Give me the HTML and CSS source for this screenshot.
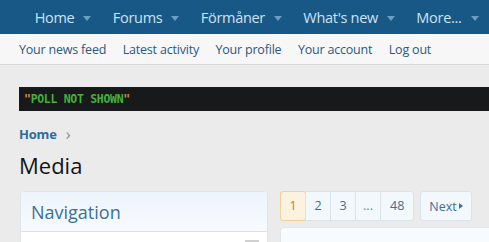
FILE: index.html
```html
<!DOCTYPE html>
<html lang="en">
<head>
    <meta charset="UTF-8">
    <meta name="viewport" content="width=device-width, initial-scale=1.0">
    <title>Media</title>
    <link rel="stylesheet" href="styles.css">
</head>
<body>

    <nav class="top-nav">
        <a href="#" class="top-link">Home <span class="caret"></span></a>
        <a href="#" class="top-link">Forums <span class="caret"></span></a>
        <a href="#" class="top-link">Förmåner <span class="caret"></span></a>
        <a href="#" class="top-link">What's new <span class="caret"></span></a>
        <a href="#" class="top-link">More... <span class="caret"></span></a>
    </nav>

    <div class="sub-nav">
        <a href="#">Your news feed</a>
        <a href="#">Latest activity</a>
        <a href="#">Your profile</a>
        <a href="#">Your account</a>
        <a href="#">Log out</a>
    </div>

    <div class="page">
        <div class="notice"><span class="quote">"</span>POLL NOT SHOWN<span class="quote">"</span></div>

        <div class="breadcrumb">
            <a href="#">Home</a>
            <span class="crumb-sep">&rsaquo;</span>
        </div>

        <h1>Media</h1>

        <div class="columns">
            <aside class="side-block">
                <h3 class="side-head">Navigation</h3>
                <div class="side-body">
                    <span class="side-input"></span>
                </div>
            </aside>

            <main class="main-col">
                <div class="pager">
                    <div class="pages">
                        <a href="#" class="page-num current">1</a>
                        <a href="#" class="page-num">2</a>
                        <a href="#" class="page-num">3</a>
                        <span class="page-num dots">...</span>
                        <a href="#" class="page-num">48</a>
                    </div>
                    <a href="#" class="page-next">Next<span class="next-arrow"></span></a>
                </div>
                <div class="main-box"></div>
            </main>
        </div>
    </div>

</body>
</html>
```

FILE: styles.css
```css
body {
    margin: 0;
    font-family: "Open Sans", "Noto Sans", sans-serif;
    background-color: #ebebeb;
    overflow: hidden;
}

a {
    text-decoration: none;
}

/* barra superior */
.top-nav {
    display: flex;
    height: 34px;
    align-items: center;
    padding-left: 24px;
    background-color: #185886;
    white-space: nowrap;
}

    .top-nav .top-link {
        display: flex;
        align-items: center;
        padding: 0 10.7px;
        font-size: 14.5px;
        color: #cfe3f3;
        letter-spacing: -0.3px;
    }

    .top-nav .caret {
        display: inline-block;
        width: 0;
        height: 0;
        margin-left: 9px;
        margin-top: 2px;
        border-left: 4.5px solid transparent;
        border-right: 4.5px solid transparent;
        border-top: 5px solid #6e9cc2;
    }

.sub-nav {
    display: flex;
    align-items: center;
    height: 30px;
    padding-left: 19px;
    gap: 16.5px;
    background-color: #f7f7f7;
    border-bottom: 1px solid #d8d8d8;
    white-space: nowrap;
}

    .sub-nav a {
        font-size: 12.5px;
        color: #2b5882;
        letter-spacing: -0.2px;
    }

.page {
    padding: 22px 0 0 19px;
}

.notice {
    background-color: #18191a;
    height: 24px;
    line-height: 24px;
    padding-left: 5px;
    font-family: "DejaVu Sans Mono", monospace;
    font-weight: bold;
    font-size: 11.5px;
    color: #43b23a;
    letter-spacing: -0.3px;
}

    .notice .quote {
        color: #d9894a;
    }

.breadcrumb {
    display: flex;
    align-items: center;
    margin-top: 13px;
    height: 20px;
    font-size: 13px;
}

    .breadcrumb a {
        color: #2f6c9e;
        font-weight: bold;
        letter-spacing: -0.2px;
    }

    .breadcrumb .crumb-sep {
        margin-left: 9px;
        color: #8a8a8a;
        font-size: 16px;
        line-height: 16px;
    }

h1 {
    margin: 6px 0 0 0;
    font-size: 22px;
    font-weight: normal;
    color: #141414;
    line-height: 30px;
}

.columns {
    display: flex;
    gap: 12px;
    margin-top: 11px;
}

.side-block {
    width: 246px;
    flex-shrink: 0;
    margin-left: 1px;
    background-color: #fff;
    border: 1px solid #dfe5ea;
    border-radius: 4px;
    overflow: hidden;
}

.side-head {
    margin: 0;
    height: 39px;
    line-height: 40px;
    padding-left: 10px;
    font-size: 18px;
    font-weight: normal;
    color: #3a6f9b;
    background: linear-gradient(to bottom, #edf4fb, #f8fbfe);
    border-bottom: 1px solid #d6e2ec;
}

.side-body {
    height: 40px;
    position: relative;
}

.side-input {
    position: absolute;
    right: 8px;
    top: 8px;
    width: 14px;
    height: 4px;
    background-color: #d0d0d0;
}

.main-col {
    flex: 1;
}

.pager {
    display: flex;
    gap: 6px;
}

.pages {
    display: flex;
    border: 1px solid #dae3ea;
    border-radius: 3px;
    background-color: #f3f8fc;
}

.page-num {
    display: block;
    height: 28px;
    line-height: 28px;
    padding: 0 7px;
    min-width: 10px;
    text-align: center;
    font-size: 12.5px;
    color: #3b6f98;
    border-left: 1px solid #dae3ea;
}

    .page-num:first-child {
        border-left: none;
    }

    .page-num.current {
        background-color: #fdf1df;
        color: #c27a2a;
        border: 1px solid #f1d09e;
        margin: -1px;
        border-radius: 3px;
        padding: 0 7px;
    }

    .page-num.dots {
        color: #6a8aa5;
        padding: 0 7px;
    }

    .page-num:last-child {
        padding: 0 9px;
    }

.page-next {
    display: flex;
    align-items: center;
    height: 28px;
    padding: 0 8px;
    font-size: 12.5px;
    color: #3b6f98;
    background-color: #f3f8fc;
    border: 1px solid #dae3ea;
    border-radius: 3px;
}

.next-arrow {
    display: inline-block;
    width: 0;
    height: 0;
    margin-left: 2px;
    border-top: 3.5px solid transparent;
    border-bottom: 3.5px solid transparent;
    border-left: 4px solid #3b6f98;
}

.main-box {
    margin-top: 6px;
    height: 40px;
    background-color: #f8fbfe;
    border: 1px solid #dfe7ee;
    border-radius: 4px 0 0 0;
    border-right: none;
}
```
